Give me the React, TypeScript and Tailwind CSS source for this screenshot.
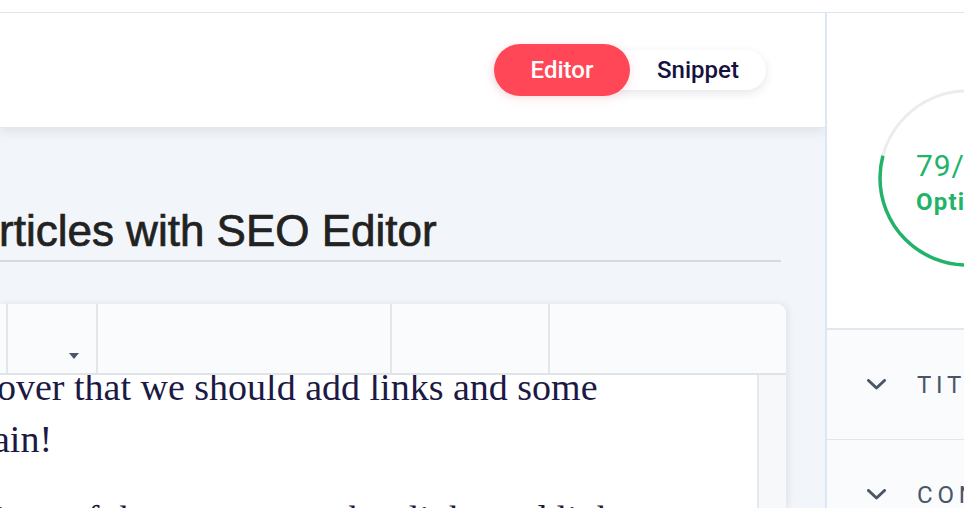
import { useState } from 'react';

function ScoreRing({ score }: { score: number }) {
    const r = 87;
    const c = 2 * Math.PI * r;
    return (
        <div className="relative w-[178px] h-[178px]">
            <svg width="178" height="178" viewBox="0 0 178 178" className="-rotate-90">
                <circle cx="89" cy="89" r={r} fill="none" stroke="#ececec" strokeWidth="3" />
                <circle
                    cx="89"
                    cy="89"
                    r={r}
                    fill="none"
                    stroke="#22b36b"
                    strokeWidth="3.5"
                    strokeDasharray={`${(c * score) / 100} ${c}`}
                />
            </svg>
            <div className="absolute inset-0 flex items-center justify-start pl-[38px] pt-[10px] text-[#22b36b]">
                <div className="flex flex-col items-start">
                    <span className="text-[30px] leading-[34px] tracking-[0.03em]">{score}/100</span>
                    <span className="mt-[4px] text-[24px] leading-[30px] font-bold tracking-[0.05em]">Optimized</span>
                </div>
            </div>
        </div>
    );
}

function SectionRow({ label }: { label: string }) {
    return (
        <div className="h-[110px] shrink-0 flex items-center pl-[40px] gap-[31px] bg-[#fafbfd] border-b border-[#e2e6eb]">
            <svg width="19" height="11" viewBox="0 0 19 11" fill="none">
                <polyline points="1.5,1.5 9.5,9 17.5,1.5" stroke="#4a5568" strokeWidth="3" strokeLinecap="round" strokeLinejoin="round" />
            </svg>
            <span className="text-[24px] tracking-[0.2em] text-[#4a5568] whitespace-nowrap">{label}</span>
        </div>
    );
}

export default function App() {
    const [mode, setMode] = useState<'editor' | 'snippet'>('editor');

    return (
        <div className="w-[964px] h-[508px] overflow-hidden bg-white flex flex-col font-['Roboto',sans-serif]">
            <div className="h-[13px] shrink-0 border-b border-[#dde5ed]" />

            <div className="flex flex-1 min-h-0">
                {/* main column */}
                <main className="w-[825px] shrink-0 flex flex-col bg-[#f2f5f9] overflow-hidden">
                    <header className="h-[115px] shrink-0 bg-white flex items-center justify-end pr-[59px] border-b border-[#e2e7ec] shadow-[0_3px_10px_rgba(180,192,205,0.35)] relative z-10">
                        <div className="flex items-center h-[40px] rounded-full bg-white shadow-[0_3px_10px_rgba(40,50,80,0.12)]">
                            <button
                                onClick={() => setMode('editor')}
                                className={`h-[52px] w-[136px] rounded-full text-[24px] font-medium ${mode === 'editor' ? 'bg-[#ff4757] text-white shadow-[0_2px_12px_rgba(255,71,87,0.15)]' : 'text-[#1b1548]'}`}
                            >
                                Editor
                            </button>
                            <button
                                onClick={() => setMode('snippet')}
                                className={`h-[40px] w-[136px] rounded-full text-[24px] font-medium ${mode === 'snippet' ? 'bg-[#ff4757] text-white' : 'text-[#16113f]'}`}
                            >
                                Snippet
                            </button>
                        </div>
                    </header>

                    <div className="flex flex-col pr-[39px] pt-[76px] min-h-0">
                        <div className="mr-[5px] pb-[3px] border-b-2 border-[#d6dae0]">
                            <h1 className="ml-[-1px] text-[44px] leading-[53px] text-[#222222] [-webkit-text-stroke:0.7px_#222222] font-['Liberation_Sans',sans-serif] whitespace-nowrap">
                                rticles with SEO Editor
                            </h1>
                        </div>

                        <div className="mt-[42px] flex flex-col bg-white rounded-tr-[9px] shadow-[2px_0_6px_rgba(170,180,195,0.25)] min-h-0">
                            <div className="h-[71px] shrink-0 flex bg-[#f9fbfd] rounded-tr-[9px] border-b-2 border-[#e0e4e9]">
                                <div className="w-[8px] border-r-2 border-[#e3e7ec]" />
                                <div className="w-[90px] border-r-2 border-[#e3e7ec] flex items-end justify-end pr-[17px] pb-[14px]">
                                    <svg width="10" height="6" viewBox="0 0 10 6">
                                        <polygon points="0,0 10,0 5,6" fill="#4a5568" />
                                    </svg>
                                </div>
                                <div className="w-[294px] border-r-2 border-[#e3e7ec]" />
                                <div className="w-[158px] border-r-2 border-[#e3e7ec]" />
                                <div className="flex-1" />
                            </div>

                            <div className="flex flex-1 min-h-0">
                                <div className="flex-1 overflow-hidden border-r-2 border-[#e6e8ec]">
                                    <div className="-mt-[14px] font-['Liberation_Serif',serif] text-[38px] leading-[52px] text-[#1c1a45] whitespace-nowrap">
                                        <p className="ml-[-3px]">over that we should add links and some</p>
                                        <p className="ml-[-7px]">ain!</p>
                                        <p className="mt-[28px] ml-[-5px]">ions of the content, anchor links and links</p>
                                    </div>
                                </div>
                                <div className="w-[27px] shrink-0 bg-[#f7f8fa]" />
                            </div>
                        </div>
                    </div>
                </main>

                {/* score sidebar */}
                <aside className="w-[282px] shrink-0 flex flex-col bg-white border-l-2 border-[#dbe7f2]">
                    <div className="h-[317px] shrink-0 flex justify-center pt-[76px] border-b-2 border-[#e3e7eb]">
                        <ScoreRing score={79} />
                    </div>
                    <SectionRow label="TITLE" />
                    <SectionRow label="CONTENT" />
                </aside>
            </div>
        </div>
    );
}
